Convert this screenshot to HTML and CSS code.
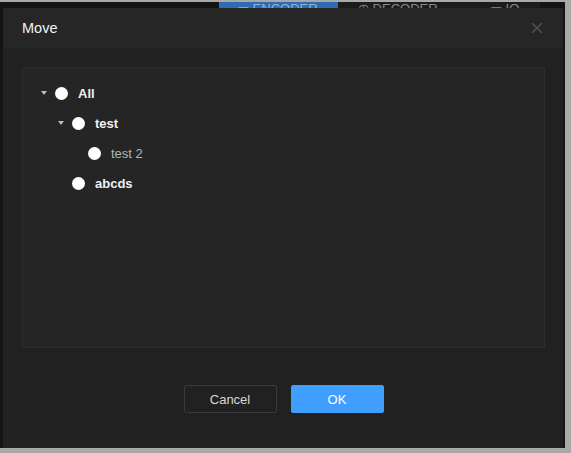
FILE: index.html
```html
<!DOCTYPE html>
<html>
<head>
<meta charset="utf-8">
<link rel="stylesheet" href="styles.css">
</head>
<body>
<div class="frame">
  <div class="backdrop">
    <div class="tabs">
      <div class="tab tab-active">▭ ENCODER</div>
      <div class="tab">◷ DECODER</div>
      <div class="tab">▭ IO</div>
    </div>
  </div>
  <div class="dialog">
    <div class="dialog-header">
      <span class="dialog-title">Move</span>
      <svg class="close" width="12" height="12" viewBox="0 0 12 12"><path d="M1 1L11 11M11 1L1 11" stroke="#4f4f4f" stroke-width="1.6"/></svg>
    </div>
    <div class="dialog-body">
      <div class="tree">
        <div class="node lvl0"><span class="caret"></span><span class="dot"></span><span class="label">All</span></div>
        <div class="node lvl1"><span class="caret"></span><span class="dot"></span><span class="label">test</span></div>
        <div class="node lvl2"><span class="caret empty"></span><span class="dot"></span><span class="label dim">test 2</span></div>
        <div class="node lvl1"><span class="caret empty"></span><span class="dot"></span><span class="label">abcds</span></div>
      </div>
      <div class="actions">
        <button class="btn btn-cancel">Cancel</button>
        <button class="btn btn-ok">OK</button>
      </div>
    </div>
  </div>
</div>
</body>
</html>
```
FILE: styles.css
```css
* { box-sizing: border-box; }
html, body { margin: 0; padding: 0; }
body {
  width: 571px;
  height: 453px;
  background: #a9a9a9;
  font-family: "Liberation Sans", Arial, sans-serif;
  overflow: hidden;
}
.frame {
  position: relative;
  width: 565px;
  height: 446px;
  margin-top: 2px;
  background: #141414;
  overflow: hidden;
}
.backdrop { height: 100%; }
.tabs {
  display: flex;
  margin-left: 219px;
  height: 8px;
  width: 321px;
  background: #1c1c1c;
  overflow: hidden;
}
.tab {
  flex: 0 0 auto;
  width: 132px;
  height: 20px;
  color: #8a8a8a;
  font-size: 13px;
  line-height: 14px;
  padding-left: 20px;
  white-space: nowrap;
}
.tab-active {
  width: 119px;
  padding-left: 18px;
  background: #2f6db3;
  color: #8fb3dc;
}
.dialog {
  position: absolute;
  left: 3px;
  top: 6px;
  width: 560px;
  height: 450px;
  background: #212121;
  display: flex;
  flex-direction: column;
}
.dialog-header {
  height: 40px;
  background: #262626;
  display: flex;
  align-items: center;
  justify-content: space-between;
  padding: 0 20px 0 19px;
}
.dialog-title {
  color: #f2f2f2;
  font-size: 14.5px;
  margin-top: -1px;
}
.close { margin-top: 0; }
.dialog-body {
  padding: 19px 18px 0 19px;
  display: flex;
  flex-direction: column;
}
.tree {
  height: 281px;
  background: #252525;
  border: 1px solid #2c2c2c;
  padding: 10px 0 0 16px;
}
.node {
  height: 30px;
  display: flex;
  align-items: center;
}
.lvl1 { padding-left: 17px; }
.lvl2 { padding-left: 33px; }
.caret {
  width: 10px;
  height: 10px;
  margin-right: 6px;
  position: relative;
}
.caret::after {
  content: "";
  position: absolute;
  left: 2px;
  top: 3px;
  border-left: 3px solid transparent;
  border-right: 3px solid transparent;
  border-top: 4px solid #bdbdbd;
}
.caret.empty::after { display: none; }
.dot {
  width: 13px;
  height: 13px;
  border-radius: 50%;
  background: #ffffff;
  margin-right: 10px;
}
.label {
  color: #f0f0f0;
  font-size: 13px;
  font-weight: bold;
}
.label.dim { color: #b4b4b4; font-weight: normal; }
.actions {
  display: flex;
  justify-content: center;
  gap: 14px;
  margin-top: 37px;
}
.btn {
  width: 93px;
  height: 28px;
  font-family: "Liberation Sans", Arial, sans-serif;
  font-size: 13px;
  border-radius: 2px;
  cursor: pointer;
}
.btn-cancel {
  background: #212121;
  border: 1px solid #3a3a3a;
  color: #d8d8d8;
}
.btn-ok {
  background: #409eff;
  border: 1px solid #409eff;
  color: #ffffff;
}
```
